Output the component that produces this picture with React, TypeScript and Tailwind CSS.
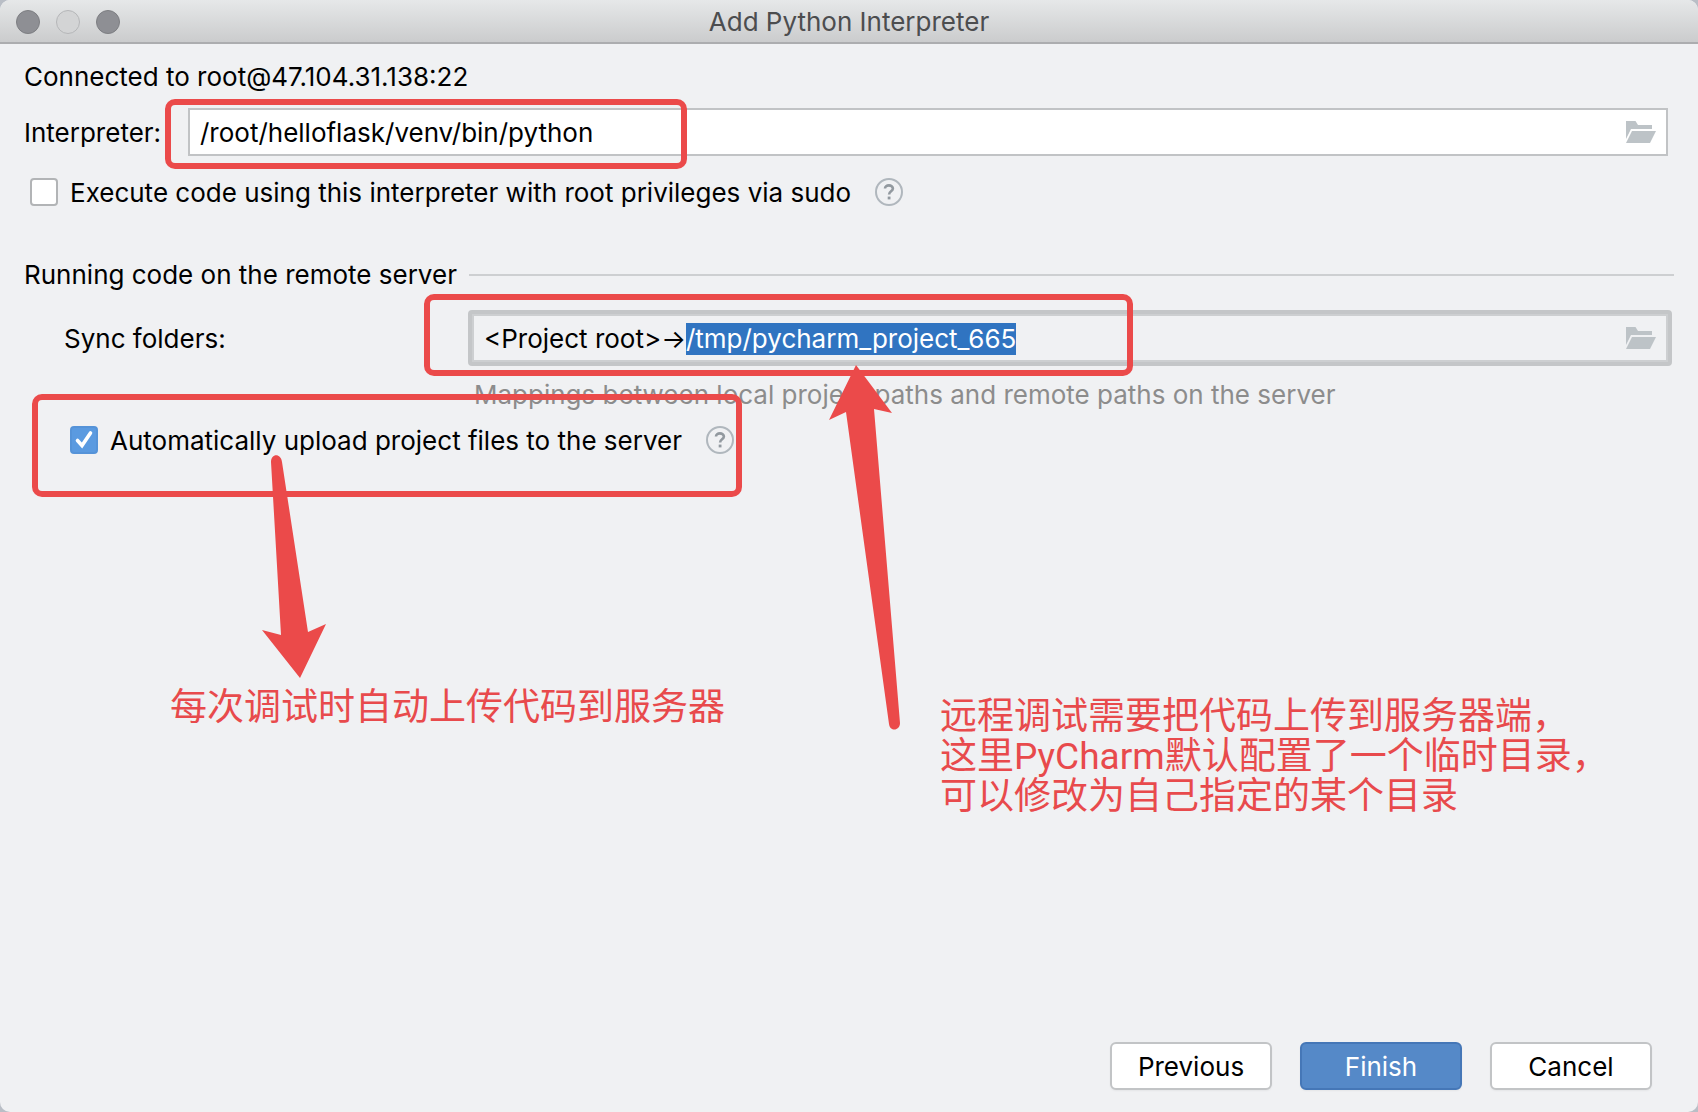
import { useEffect, useRef, useState } from 'react';
import { clsx } from 'clsx';

const PROJECT_ROOT = '<Project root>→';
const REMOTE_PATH = '/tmp/pycharm_project_665';

function FolderIcon() {
    return (
        <svg viewBox="0 0 30 22" className="h-[22px] w-[30px]" fill="#bdc3c7">
            <path d="M0 0h9.5l2.5 4h14v4H5L0 18z" />
            <path d="M6 10h24l-6 12H0z" />
        </svg>
    );
}

function HelpButton() {
    return (
        <button
            type="button"
            aria-label="Help"
            className="flex size-7 shrink-0 items-center justify-center rounded-full border-2 border-[#b0b7bd]"
        >
            <svg viewBox="0 0 12 16" className="h-4 w-3" fill="none">
                <path
                    d="M2 4.6C2 2.6 3.7 1.4 5.9 1.4s4 1.2 4 3.2c0 2.6-3.8 2.9-3.8 5.8"
                    stroke="#92999f"
                    strokeWidth="2.6"
                />
                <rect x="4.7" y="12.6" width="2.8" height="2.8" fill="#92999f" />
            </svg>
        </button>
    );
}

interface CheckRowProps {
    id: string;
    label: string;
    defaultChecked?: boolean;
    className?: string;
}

function CheckRow({ id, label, defaultChecked = false, className }: CheckRowProps) {
    const [checked, setChecked] = useState(defaultChecked);

    return (
        <div className={clsx('flex h-8 items-center', className)}>
            <span className="grid size-7 shrink-0">
                <input
                    id={id}
                    type="checkbox"
                    checked={checked}
                    onChange={(e) => setChecked(e.target.checked)}
                    className="col-start-1 row-start-1 size-7 appearance-none rounded-sm border-2 border-[#b2b4b6] bg-white checked:border-[#5593d8] checked:bg-[#5a9ae0]"
                />
                {checked && (
                    <svg
                        viewBox="0 0 28 28"
                        className="pointer-events-none col-start-1 row-start-1 size-7"
                        fill="none"
                    >
                        <path
                            d="M7.5 14.5l4.5 5L20.5 7"
                            stroke="#fff"
                            strokeWidth="3.6"
                            strokeLinecap="round"
                        />
                    </svg>
                )}
            </span>
            <label htmlFor={id} className="pt-[2px] pl-3">
                {label}
            </label>
            <span className="ml-6 flex">
                <HelpButton />
            </span>
        </div>
    );
}

function SyncFoldersField() {
    const ref = useRef<HTMLInputElement>(null);

    useEffect(() => {
        const input = ref.current;
        if (!input) return;
        input.focus();
        input.setSelectionRange(PROJECT_ROOT.length, input.value.length);
    }, []);

    return (
        <div className="flex h-14 flex-1 items-center rounded-sm border-4 border-[#c4c6c8] outline-2 -outline-offset-6 outline-[#cdcfd1]">
            <input
                ref={ref}
                id="sync"
                type="text"
                defaultValue={PROJECT_ROOT + REMOTE_PATH}
                className="min-w-0 flex-1 bg-transparent pt-[2px] pl-3 outline-none selection:bg-[#3074c1] selection:text-white"
            />
            <button type="button" aria-label="Browse sync folders" className="mr-3">
                <FolderIcon />
            </button>
        </div>
    );
}

function Annotations() {
    return (
        <div className="pointer-events-none absolute inset-0 overflow-hidden font-[Roboto,'Noto_Sans_CJK_SC',sans-serif] text-[37px] leading-10 text-[#e84a4c]">
            <div className="absolute top-[99px] left-[165px] h-[70px] w-[522px] rounded-[10px] border-6 border-[#eb4a4a]" />
            <div className="absolute top-[294px] left-[424px] h-[82px] w-[709px] rounded-[10px] border-6 border-[#eb4a4a]" />
            <div className="absolute top-[394px] left-[32px] h-[103px] w-[710px] rounded-[10px] border-6 border-[#eb4a4a]" />
            <svg
                viewBox="0 0 64 224"
                className="absolute top-[455px] left-[262px] h-[224px] w-[64px]"
                fill="#eb4a4a"
            >
                <path d="M9 7c0-9 10-9 11 0l26 170 18-8-26 54L0 175l19 5z" />
            </svg>
            <svg
                viewBox="0 0 72 366"
                className="absolute top-[365px] left-[829px] h-[366px] w-[72px]"
                fill="#eb4a4a"
            >
                <path d="M27 0l36 48-18-4 26 314c0 8-10 9-11 1L17 47 0 55z" />
            </svg>
            <p className="absolute top-[688px] left-[170px] whitespace-nowrap">
                每次调试时自动上传代码到服务器
            </p>
            <p className="absolute top-[697px] left-[940px] whitespace-nowrap">
                远程调试需要把代码上传到服务器端，
                <br />
                这里PyCharm默认配置了一个临时目录，
                <br />
                可以修改为自己指定的某个目录
            </p>
        </div>
    );
}

export default function App() {
    return (
        <div className="min-h-screen bg-[#b9bec6] font-['Inter','Noto_Sans_CJK_SC',sans-serif] text-[26px] leading-8 text-black">
            <div className="relative flex min-h-screen flex-col overflow-hidden rounded-[10px] bg-[#f0f1f3]">
                <header className="grid h-11 grid-cols-3 items-center border-b-2 border-[#acadaf] bg-linear-to-b from-[#e6e8e9] to-[#cbcccd] px-4 pt-[2px]">
                    <div className="flex gap-4">
                        <button type="button" aria-label="Close" className="size-6 rounded-full border border-[#7d7e82] bg-[#8e8f94]" />
                        <button type="button" aria-label="Minimize" className="size-6 rounded-full border border-[#b5b6b8] bg-[#d3d4d5]" />
                        <button type="button" aria-label="Zoom" className="size-6 rounded-full border border-[#7d7e82] bg-[#8e8f94]" />
                    </div>
                    <h1 className="text-center whitespace-nowrap text-[#4c4d4f]">Add Python Interpreter</h1>
                </header>

                <main className="flex-1 px-6 pt-[17px]">
                    <p>Connected to root@47.104.31.138:22</p>
                    <div className="mt-[15px] mr-[6px] flex items-center">
                        <label htmlFor="interpreter" className="w-[164px] shrink-0 pt-[2px]">
                            Interpreter:
                        </label>
                        <div className="flex h-12 flex-1 items-center border-2 border-[#c1c3c5] bg-white">
                            <input
                                id="interpreter"
                                type="text"
                                defaultValue="/root/helloflask/venv/bin/python"
                                className="min-w-0 flex-1 bg-transparent pt-[2px] pl-[10px] outline-none"
                            />
                            <button type="button" aria-label="Browse interpreter" className="mr-[10px]">
                                <FolderIcon />
                            </button>
                        </div>
                    </div>
                    <CheckRow
                        id="sudo"
                        label="Execute code using this interpreter with root privileges via sudo"
                        className="mt-5 pl-[6px]"
                    />

                    <fieldset className="mt-[51px]">
                        <div className="flex items-center gap-3">
                            <h2>Running code on the remote server</h2>
                            <div className="h-[2px] flex-1 bg-[#cdcfd1]" />
                        </div>
                        <div className="mt-[19px] mr-[2px] flex items-center pl-10">
                            <label htmlFor="sync" className="w-[404px] shrink-0 pt-[2px]">
                                Sync folders:
                            </label>
                            <SyncFoldersField />
                        </div>
                        <p className="mt-[13px] pl-[450px] text-[#8c8c8c]">
                            Mappings between local project paths and remote paths on the server
                        </p>
                        <CheckRow
                            id="upload"
                            label="Automatically upload project files to the server"
                            defaultChecked
                            className="mt-[13px] pl-[46px]"
                        />
                    </fieldset>
                </main>

                <footer className="flex justify-end gap-7 pr-[46px] pb-[22px]">
                    <button type="button" className="h-12 w-[162px] rounded-md border-2 border-[#c2c4c6] bg-white pt-[2px] shadow-xs">
                        Previous
                    </button>
                    <button type="button" className="h-12 w-[162px] rounded-md border-2 border-[#4577b7] bg-[#5589c8] pt-[2px] text-white shadow-xs">
                        Finish
                    </button>
                    <button type="button" className="h-12 w-[162px] rounded-md border-2 border-[#c2c4c6] bg-white pt-[2px] shadow-xs">
                        Cancel
                    </button>
                </footer>

                <Annotations />
            </div>
        </div>
    );
}
